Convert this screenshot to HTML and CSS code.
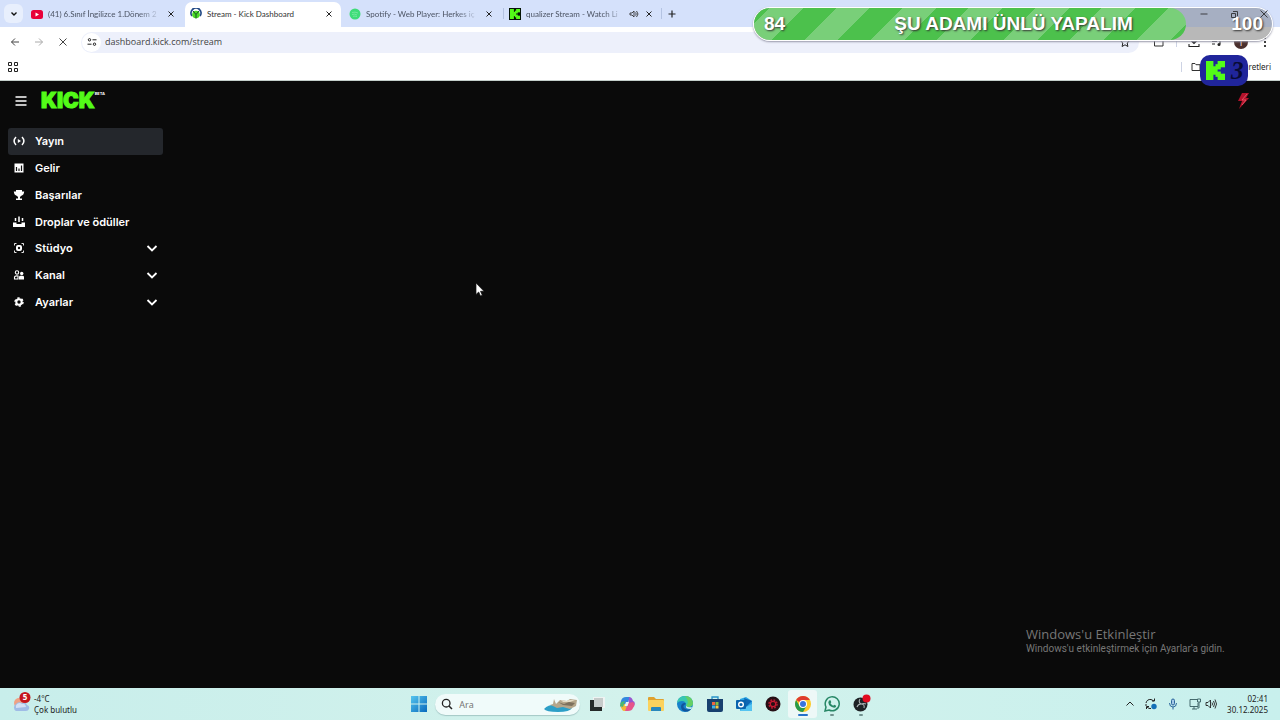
FILE: index.html
```html
<!DOCTYPE html>
<html lang="tr">
<head>
<meta charset="utf-8">
<title>Stream - Kick Dashboard</title>
<link rel="stylesheet" href="styles.css">
</head>
<body>
<svg class="defs" aria-hidden="true">
  <symbol id="close" viewBox="0 0 10 10"><path d="M2.500 2.500l5 5M7.500 2.500l-5 5" stroke="currentColor" stroke-width="1"/></symbol>
  <symbol id="kmark" viewBox="0 0 18 18"><rect width="7" height="18"/><rect x="6" y="5" width="5" height="8"/><rect x="9" y="3" width="5" height="5"/><rect x="9" y="10" width="5" height="5"/><rect x="11" width="7" height="6"/><rect x="11" y="12" width="7" height="6"/></symbol>
  <symbol id="down" viewBox="0 0 12 12"><path d="M1.500 4l4.500 4.500L10.500 4" fill="none" stroke="currentColor" stroke-width="1.800"/></symbol>
</svg>

<header class="browser">
  <div class="tabstrip">
    <button class="tab-search" aria-label="Sekmelerde ara"><svg class="i8" viewBox="0 0 8 8"><path d="M1.500 2.500L4 5l2.500-2.500" fill="none" stroke="#111" stroke-width="1.400"/></svg></button>
    <div class="tab">
      <svg class="i12" viewBox="0 0 12 12"><rect y="2" width="12" height="9" rx="2.500" fill="#e8003a"/><path d="M4.500 4.500v4l3.500-2z" fill="#fff"/></svg>
      <span class="tab-title">(41) 6.Sınıf İngilizce 1.Dönem 2</span>
      <button class="plain" aria-label="Kapat"><svg class="i10"><use href="#close"/></svg></button>
    </div>
    <div class="tab active">
      <svg class="i12" viewBox="0 0 12 12"><path d="M2 8A5 5 0 1 1 10 8" fill="none" stroke="#244b86" stroke-width="1.800"/><circle cx="6" cy="6.500" r="3.800" fill="#4cdb25"/><path d="M6 6.500L3 3M6 6.500L9 3M6 6.500v4" stroke="#154d2a" stroke-width="1"/></svg>
      <span class="tab-title">Stream - Kick Dashboard</span>
      <button class="plain" aria-label="Kapat"><svg class="i10"><use href="#close"/></svg></button>
    </div>
    <div class="tab">
      <svg class="i12" viewBox="0 0 12 12"><circle cx="6" cy="6" r="5.500" fill="#3fdc78"/><path d="M3 4.500q3-1 6 .5M3 6.500q3-1 5 .5M4 8.300q2-.6 4 .3" fill="none" stroke="#7ceba5" stroke-width=".8"/></svg>
      <span class="tab-title">Spotify - Web Player: Herkes iç</span>
      <button class="plain" aria-label="Kapat"><svg class="i10"><use href="#close"/></svg></button>
    </div>
    <div class="tab divided">
      <svg class="i12" viewBox="0 0 12 12"><rect width="12" height="12" fill="#061506"/><use href="#kmark" x="1" y="1" width="10" height="10" fill="#53fc18"/></svg>
      <span class="tab-title">qualizer Stream - Watch Li</span>
      <svg class="i10" viewBox="0 0 10 10"><path d="M1 4h2l2-2v6L3 6H1zM6.500 3.500q1.500 1.500 0 3M7.500 2q3 3 0 6" fill="none" stroke="#333" stroke-width=".9"/></svg>
      <button class="plain" aria-label="Kapat"><svg class="i10"><use href="#close"/></svg></button>
    </div>
    <button class="plain new-tab" aria-label="Yeni sekme"><svg class="i10" viewBox="0 0 10 10"><path d="M5 1.500v7M1.500 5h7" stroke="#222" stroke-width="1.200"/></svg></button>
    <div class="window-buttons">
      <button class="plain" aria-label="Küçült"><svg class="i10" viewBox="0 0 10 10"><path d="M1.500 5h7" stroke="#222"/></svg></button>
      <button class="plain" aria-label="Geri yükle"><svg class="i10" viewBox="0 0 10 10"><path d="M2.500 4.500h4v4h-4zM4 2.500h4.500V7" fill="none" stroke="#222"/></svg></button>
      <button class="plain" aria-label="Pencereyi kapat"><svg class="i10" viewBox="0 0 10 10"><path d="M1.500 1.500l7 7M8.500 1.500l-7 7" stroke="#222"/></svg></button>
    </div>
  </div>
  <div class="toolbar">
    <button class="plain" aria-label="Geri"><svg class="i12" viewBox="0 0 12 12"><path d="M10 6H2.500M6 2.500L2.500 6 6 9.500" fill="none" stroke="#444" stroke-width="1"/></svg></button>
    <button class="plain" aria-label="İleri"><svg class="i12" viewBox="0 0 12 12"><path d="M2 6h7.500M6 2.500L9.500 6 6 9.500" fill="none" stroke="#aaa" stroke-width="1"/></svg></button>
    <button class="plain" aria-label="Durdur"><svg class="i12" viewBox="0 0 12 12"><path d="M2.500 2.500l7 7M9.500 2.500l-7 7" stroke="#444"/></svg></button>
    <div class="omnibox">
      <button class="site-info" aria-label="Site bilgileri"><svg class="i10" viewBox="0 0 10 10"><circle cx="2.500" cy="2.800" r="1.200" fill="none" stroke="#222"/><path d="M5.500 2.800h4M.5 7.200h4" stroke="#222"/><circle cx="7.500" cy="7.200" r="1.200" fill="none" stroke="#222"/></svg></button>
      <input class="address" aria-label="Adres" value="dashboard.kick.com/stream">
      <svg class="i12" viewBox="0 0 12 12"><path d="M6 1.500l1.400 3 3.100.3-2.300 2.200.7 3.500L6 8.800l-2.900 1.700.7-3.500L1.500 4.800l3.100-.3z" fill="none" stroke="#222"/></svg>
    </div>
    <div class="actions">
      <svg class="i12" viewBox="0 0 12 12"><path d="M1.500 10V4H4q0-2 2-2t2 2h2v6z" fill="none" stroke="#333"/></svg>
      <i class="rule"></i>
      <svg class="i12" viewBox="0 0 12 12"><path d="M6 1v6M3.500 5L6 7.500 8.500 5M1 8v2.500h10V8" fill="none" stroke="#222" stroke-width="1.100"/></svg>
      <svg class="i12" viewBox="0 0 12 12"><path d="M1 3h6M1 5.500h5M1 8h3M9 8V3h2" fill="none" stroke="#222" stroke-width="1.100"/><circle cx="8" cy="8.500" r="1.500" fill="#222"/></svg>
      <span class="avatar">i</span>
      <svg class="i12" viewBox="0 0 12 12"><circle cx="6" cy="2" r="1"/><circle cx="6" cy="6" r="1"/><circle cx="6" cy="10" r="1"/></svg>
    </div>
  </div>
  <div class="bookmarks">
    <button class="plain" aria-label="Uygulamalar"><svg class="i10" viewBox="0 0 10 10"><path d="M.5.5h3v3h-3zM6.500.5h3v3h-3zM.5 6.500h3v3h-3zM6.500 6.500h3v3h-3z" fill="none" stroke="#222"/></svg></button>
    <div class="all-bookmarks"><i class="rule"></i><svg class="i10" viewBox="0 0 10 10"><path d="M1 8.500v-7h3l1 1.200h4v5.800z" fill="none" stroke="#333"/></svg><span>Tüm Yer İşaretleri</span></div>
  </div>
</header>

<div class="app">
  <div class="app-header">
    <button class="plain menu" aria-label="Menü"><svg class="i12" viewBox="0 0 12 12"><path d="M.5 2h11M.5 6h11M.5 10h11" stroke="#fff" stroke-width="1.300"/></svg></button>
    <a class="logo" href="#">KICK<sup>BETA</sup></a>
    <svg class="bolt" viewBox="0 0 14 18"><path d="M6 1h7l-3 5h3L3 17l3-8H2z" fill="#b3122b"/><path d="M11 2L6 8h4l-4 5" fill="none" stroke="#e8606e" stroke-width=".8"/></svg>
  </div>
  <nav class="sidebar">
    <a class="item selected" href="#"><svg class="i12" viewBox="0 0 12 12"><path d="M3 2Q-.8 6 3 10M9 2q3.800 4 0 8" fill="none" stroke="#fff" stroke-width="1.500"/><path d="M4.800 4v4L8 6z" fill="#fff"/></svg>Yayın</a>
    <a class="item" href="#"><svg class="i12" viewBox="0 0 12 12"><rect x="1.500" y="1.500" width="9" height="9" fill="#fff"/><path d="M3.500 5v4M6 6.500V9M8.500 3.500V9" stroke="#111" stroke-width="1.200"/></svg>Gelir</a>
    <a class="item" href="#"><svg class="i12" viewBox="0 0 12 12"><path d="M3 1h6v1.500h2.200Q11 6 8 7L7 8v1.500h2V11H3V9.500h2V8L4 7Q1 6 .8 2.500H3z" fill="#fff"/></svg>Başarılar</a>
    <a class="item" href="#"><svg class="i12" viewBox="0 0 12 12"><path d="M0 6.500h3.500V8h5V6.500H12V11H0z" fill="#fff"/><path d="M6 .5V6M2.500 2v3M9.500 2v3" stroke="#fff" stroke-width="1.500"/></svg>Droplar ve ödüller</a>
    <button class="item"><svg class="i12" viewBox="0 0 12 12"><path d="M1.500 3.500v-2h2M8.500 1.500h2v2M10.500 8.500v2h-2M3.500 10.500h-2v-2" fill="none" stroke="#fff" stroke-width=".9"/><rect x="3" y="3" width="6" height="6" rx="2" fill="#fff"/><circle cx="6" cy="6" r="1.200" fill="#111"/></svg>Stüdyo<svg class="i12 chevron"><use href="#down"/></svg></button>
    <button class="item"><svg class="i12" viewBox="0 0 12 12"><circle cx="4" cy="3.500" r="1.700" fill="none" stroke="#fff" stroke-width="1.100"/><path d="M1.500 10V8Q2 6.500 5 7v3z" fill="none" stroke="#fff" stroke-width="1.100"/><circle cx="8.700" cy="4.500" r="1.700" fill="#fff"/><path d="M6 10.500V8q0-1.200 1.500-1.200h2Q11 6.800 11 8v2.500z" fill="#fff"/></svg>Kanal<svg class="i12 chevron"><use href="#down"/></svg></button>
    <button class="item"><svg class="i12" viewBox="0 0 12 12"><circle cx="6" cy="6" r="2.700" fill="none" stroke="#fff" stroke-width="2"/><circle cx="6" cy="6" r="4" fill="none" stroke="#fff" stroke-width="1.500" stroke-dasharray="2.200 1.989"/></svg>Ayarlar<svg class="i12 chevron"><use href="#down"/></svg></button>
  </nav>
  <div class="watermark"><p class="wm-title">Windows'u Etkinleştir</p><p class="wm-text">Windows'u etkinleştirmek için Ayarlar'a gidin.</p></div>
</div>

<footer class="taskbar">
  <div class="weather">
    <svg class="i24" viewBox="0 0 24 24"><circle cx="9" cy="11" r="5" fill="#efa184"/><path d="M6 19a4 4 0 0 1 0-7q2-3 6-1 4-2 5 2 3 1 2 4-1 2-3 2z" fill="#9fbce6"/><path d="M6 16a4 4 0 0 1 1-4q3-2 5 0 3-1 4 3z" fill="#d3e0f5"/><circle cx="15" cy="5.500" r="5.500" fill="#c5161d"/><text x="15" y="8" text-anchor="middle" class="badge-text">5</text></svg>
    <div><div>-4°C</div><div>Çok bulutlu</div></div>
  </div>
  <div class="dock">
    <button class="plain app-slot" aria-label="Başlat"><svg class="i16" viewBox="0 0 16 16"><defs><linearGradient id="win" x2="1" y2="1"><stop stop-color="#55c5ee"/><stop offset="1" stop-color="#0869bd"/></linearGradient></defs><path d="M0 0h7.500v7.500H0zM8.500 0H16v7.500H8.500zM0 8.500h7.500V16H0zM8.500 8.500H16V16H8.500z" fill="url(#win)"/></svg></button>
    <label class="search"><svg class="i12" viewBox="0 0 12 12"><circle cx="5.200" cy="5.200" r="3.800" fill="none" stroke="#222" stroke-width="1.300"/><path d="M8 8l3 3" stroke="#222" stroke-width="1.500"/></svg><input placeholder="Ara" aria-label="Ara"><svg class="scene" viewBox="0 0 34 16"><path d="M0 13q5-5 13-4 9-1 15 3-2 4-14 4T0 13z" fill="#2d9fc7"/><path d="M6 9l3-1 1-5 2 5 4-4 7 1 3-2 7 1-1 6-6 3-7-2-6 1-4-2z" fill="#b5a68b"/><path d="M14 6l6 2 5-2 6 1-3 3-9-1z" fill="#7d705d"/><path d="M17 4l5 1 3-1 6 0-5 2-7 0z" fill="#e5dbc5"/></svg></label>
    <button class="plain app-slot" aria-label="Görev görünümü"><svg class="i16" viewBox="0 0 16 16"><rect x="4" y="1" width="12" height="11" fill="#eef3f2"/><rect x="1" y="4" width="12" height="11" fill="#252928"/><rect x="5" y="2" width="9" height="9" fill="#c6cbca"/></svg></button>
    <button class="plain app-slot" aria-label="Copilot"><svg class="i16" viewBox="0 0 16 16"><path d="M2 5q1-4 5-4h4l-4 11H3q-3-1-1-7z" fill="#3288df"/><path d="M1 8h5l3 6q-1 1-4 1-2 0-3-4z" fill="#f4b637"/><path d="M10 1q3 0 4 4 3 1 1 5l-6 1z" fill="#9855cf"/><path d="M14 6q3 2 0 6-1 3-5 3H6l3-8z" fill="#e6558a"/><path d="M2 6l4-1-2 6-3-1z" fill="#49b873"/><path d="M7 6h3L8.500 10h-3z" fill="#e2f3f4"/></svg></button>
    <button class="plain app-slot" aria-label="Dosya Gezgini"><svg class="i16" viewBox="0 0 16 16"><path d="M0 2q0-1 1-1h5l2 2h7q1 0 1 1v10H0z" fill="#dfa12f"/><rect y="4" width="16" height="11" rx="1" fill="#fbd25d"/><path d="M3 15v-3q0-1 1-1h8q1 0 1 1v3z" fill="#2988bd"/></svg></button>
    <button class="plain app-slot" aria-label="Edge"><svg class="i16" viewBox="0 0 16 16"><circle cx="8" cy="8" r="8" fill="#1681ca"/><path d="M0 7q1-7 8-7 7 0 8 7 0 4-5 4-3 0-2-2Q9 5 5 5 2 5 0 7z" fill="#38c8b0"/><path d="M8 0q7 0 8 7 0 4-5 4-2 0-2-1 4-4-1-10z" fill="#66cf64"/><path d="M9 8q-4 1-2 4 3 3 7 1l-2 2Q5 17 4 11q0-4 4-4z" fill="#11549c"/><path d="M9 10q2 2 6 1l-1 2q-6 0-5-3z" fill="#cbeff0"/></svg></button>
    <button class="plain app-slot" aria-label="Microsoft Store"><svg class="i16" viewBox="0 0 16 16"><path d="M5 4V1h6v3" fill="none" stroke="#2792c9" stroke-width="1.300"/><path d="M0 3h16v11q0 2-2 2H2q-2 0-2-2z" fill="#17406f"/><path d="M5 6h3v3H5z" fill="#ef6540"/><path d="M8.500 6h3v3h-3z" fill="#80bd45"/><path d="M5 9.500h3v3H5z" fill="#3db2e9"/><path d="M8.500 9.500h3v3h-3z" fill="#f7c841"/></svg></button>
    <button class="plain app-slot" aria-label="Outlook"><svg class="i16" viewBox="0 0 16 16"><path d="M4 3l6-2 6 4v9q0 1-1 1H5q-1 0-1-1z" fill="#2ba4e4"/><path d="M8 2l8 3-6 6z" fill="#0c66b4"/><path d="M4 14l12-6v6q0 1-1 1H5z" fill="#55c4f1"/><rect y="4" width="10" height="9" rx="1" fill="#0863ae"/><circle cx="5" cy="8.500" r="2.300" fill="none" stroke="#fff" stroke-width="1.400"/></svg></button>
    <button class="plain app-slot" aria-label="Oyun uygulaması"><svg class="i16" viewBox="0 0 16 16"><circle cx="8" cy="8" r="7.500" fill="#260f15"/><circle cx="8" cy="8" r="2.700" fill="none" stroke="#c91a32" stroke-width="1.200"/><circle cx="8" cy="8" r="4" fill="none" stroke="#b91930" stroke-width="1.500" stroke-dasharray="1.800 1.342"/></svg></button>
    <button class="plain app-slot open current" aria-label="Chrome"><svg class="i16" viewBox="0 0 16 16"><circle cx="8" cy="8" r="8" fill="#fbc928"/><path d="M8 8L1.100 4A8 8 0 0 1 14.900 4H8z" fill="#df3b31"/><path d="M1.100 4A8 8 0 0 0 8 16l3.500-6L8 8 4.500 10z" fill="#279b4b"/><circle cx="8" cy="8" r="4" fill="#fff"/><circle cx="8" cy="8" r="3" fill="#3674df"/></svg></button>
    <button class="plain app-slot open" aria-label="WhatsApp"><svg class="i16" viewBox="0 0 16 16"><path d="M1 15l1-4A7 7 0 1 1 5 14z" fill="none" stroke="#278766" stroke-width="1.500"/><path d="M5 4.500l1.500-.2.800 2-.8 1q1 1.700 2.700 2.400l1-1 2 1q0 2-2 2Q5 11 4.300 6.500z" fill="#278766"/></svg></button>
    <button class="plain app-slot open" aria-label="OBS Studio"><svg class="i16 obs" viewBox="0 0 16 16"><circle cx="7.500" cy="8.500" r="7" fill="#1d2225"/><path d="M7 3q-2 3 1 5 4 0 3 4M8 8q-3 0-4 3M8 8q3-1 5 0" fill="none" stroke="#aeb4b6" stroke-width="1.100"/><circle cx="13.500" cy="2.500" r="4" fill="#e20c20"/></svg></button>
  </div>
  <div class="tray">
    <button class="plain" aria-label="Gizli simgeler"><svg class="i10" viewBox="0 0 10 10"><path d="M1.500 6.500L5 3l3.500 3.500" fill="none" stroke="#222"/></svg></button>
    <svg class="i12" viewBox="0 0 12 12"><path d="M1 5q1-4 5-3.500L9 3M9.500.5V3H7M1.500 11V8.500H4M2 9q2 2 4 1.500M1 6v2" fill="none" stroke="#222"/><circle cx="9" cy="8.500" r="2.700" fill="#146fb6"/></svg>
    <svg class="i12 mic" viewBox="0 0 12 12"><rect x="4.500" y="1" width="3" height="6" rx="1.500" fill="#a3c7e6" stroke="#2a659c"/><path d="M2.500 5q0 4 3.500 4t3.500-4M6 9v2.500" fill="none" stroke="#2a659c"/></svg>
    <div class="net"><svg class="i12" viewBox="0 0 12 12"><path d="M8 1.500H1v7h8V5M3 11h5M5 8.500V11M8.500 1h3v3h-3zM10 4v6H8" fill="none" stroke="#355b60" stroke-width=".9"/></svg><svg class="i12" viewBox="0 0 12 12"><path d="M1 4.500h2L5.500 2v8L3 7.500H1zM7 4.500q1 1.500 0 3M8.500 3q2 3 0 6M10 1.500q3 4.500 0 9" fill="none" stroke="#222" stroke-width=".9"/></svg></div>
    <div class="clock"><div>02:41</div><div>30.12.2025</div></div>
  </div>
</footer>

<div class="goal"><div class="goal-fill"></div><span class="goal-now">84</span><strong class="goal-title">ŞU ADAMI ÜNLÜ YAPALIM</strong><span class="goal-max">100</span></div>
<div class="viewers"><svg class="viewers-k"><use href="#kmark"/></svg><span>3</span></div>
<svg class="cursor" viewBox="0 0 10 15"><path d="M1 1v11.500l2.700-2.500 1.800 4 1.800-.8-1.800-3.900H9z" fill="#fff" stroke="#111" stroke-width=".7"/></svg>
</body>
</html>
```
FILE: styles.css
```css
* { box-sizing: border-box; }
html, body { margin: 0; height: 100%; }
body { display: flex; flex-direction: column; position: relative; overflow: hidden; background: #0a0a0a; font-family: "Noto Sans", "Open Sans", sans-serif; font-size: 8px; color: #222; }
svg { display: block; flex: none; }
.defs { position: absolute; width: 0; height: 0; }
button, input { font: inherit; color: inherit; border: 0; padding: 0; background: none; }
input { outline: 0; min-width: 0; }
a { color: inherit; text-decoration: none; }
p { margin: 0; }
.i8 { width: 8px; height: 8px; }
.i10 { width: 10px; height: 10px; }
.i12 { width: 12px; height: 12px; }
.i16 { width: 16px; height: 16px; }
.i24 { width: 24px; height: 24px; }
.plain { display: grid; place-items: center; flex: none; }
.rule { width: 1px; height: 10px; background: #cdd3e4; }

.browser { flex: none; background: #fff; border-bottom: 1px solid #c4cfcb; }
.tabstrip { display: flex; align-items: center; height: 27px; padding-left: 4px; background: #d5e1fb; }
.tab-search { display: grid; place-items: center; width: 19px; height: 19px; margin-right: 3px; border-radius: 6px; background: #e8effd; }
.tab { display: flex; align-items: center; gap: 5px; width: 159px; height: 23px; padding: 0 9px 0 5px; color: #4b5363; }
.tab-title { flex: 1; min-width: 0; font: 8px/14px Lato, sans-serif; white-space: nowrap; overflow: hidden; mask-image: linear-gradient(90deg, #000 80%, transparent); }
.tab.active { width: 156px; margin-right: 3px; padding-right: 7px; background: #fff; box-shadow: 0 4px #fff; border-radius: 7px 7px 0 0; color: #333; }
.tab.active .tab-title { mask-image: none; }
.tab .plain { color: #222; }
.divided { border-left: 1px solid; border-right: 1px solid; border-image: linear-gradient(transparent 30%, #b4c3e2 30% 70%, transparent 70%) 1; padding-right: 7px; }
.new-tab { width: 20px; height: 20px; }
.window-buttons { display: flex; gap: 20px; margin-left: auto; padding-right: 11px; position: relative; z-index: 2; opacity: .8; }
.toolbar { display: flex; align-items: center; gap: 12px; height: 30px; padding: 0 9px; }
.omnibox { display: flex; flex: 1; align-items: center; height: 21px; padding-right: 8px; border-radius: 11px; background: #edf0fb; }
.site-info { display: grid; place-items: center; width: 19px; height: 19px; margin: 1px; border-radius: 10px; background: #fff; }
.address { flex: 1; padding: 0 0 1px 3px; font: 9px/16px "Open Sans", sans-serif; color: #444; }
.actions { display: flex; align-items: center; gap: 11px; padding-left: 2px; }
.avatar { display: grid; place-items: center; width: 14px; height: 14px; border-radius: 7px; background: #4b302e; color: #fff; font-size: 8px; }
.bookmarks { display: flex; align-items: center; justify-content: space-between; height: 23px; padding: 0 9px 4px 8px; }
.all-bookmarks { display: flex; align-items: center; gap: 9px; font-size: 8px; }
.all-bookmarks span { margin-left: -5px; }

.app { display: flex; flex-direction: column; flex: 1; min-height: 0; background: #0a0a0a; font-family: Inter, sans-serif; color: #fff; }
.app-header { display: flex; align-items: center; height: 40px; padding: 0 30px 0 15px; }
.logo { margin-left: 14px; font: 900 21px/24px Inter, sans-serif; color: #53fc18; -webkit-text-stroke: 1px #53fc18; white-space: nowrap; display: flex; }
.logo sup { font: 700 4px/8px Inter, sans-serif; color: #fff; -webkit-text-stroke: 0; padding-top: 1px; }
.bolt { width: 14px; height: 18px; margin-left: auto; }
.sidebar { display: flex; flex-direction: column; width: 155px; height: 187px; margin: 7px 0 0 8px; }
.item { display: flex; flex: 1; align-items: center; gap: 10px; padding: 0 5px; border-radius: 3px; font: 600 11px/16px Inter, sans-serif; text-align: left; }
.item.selected { background: #24272c; }
.chevron { margin-left: auto; }
.watermark { align-self: flex-end; width: 254px; margin-top: auto; padding-bottom: 32px; font-family: "Open Sans", sans-serif; color: #777; white-space: nowrap; }
.wm-title { font-size: 13px; line-height: 16px; }
.wm-text { font: 10px/14px Roboto, sans-serif; }

.taskbar { flex: none; display: grid; grid-template-columns: 1fr auto 1fr; align-items: center; height: 32px; padding: 0 12px; background: linear-gradient(90deg, #c8eeeb, #d3f2ec 50%, #c8f0ed); font: 8px/11px "Noto Sans", sans-serif; }
.weather { display: flex; align-items: center; margin-left: -2px; }
.badge-text { fill: #fff; font: 700 8px "Noto Sans", sans-serif; }
.dock { display: flex; align-items: center; justify-content: space-between; width: 472px; }
.app-slot { position: relative; width: 29px; height: 28px; }
.search { display: flex; align-items: center; gap: 6px; width: 145px; height: 21px; padding: 0 2px 0 6px; border-radius: 11px; background: #f0fbfa; box-shadow: 0 1px 1px #a4c8c6; margin: 0 2px; }
.search input { flex: 1; font-size: 9px; }
.scene { width: 34px; height: 16px; }
.current { background: #edf8f7; border-radius: 3px; }
.open::after { content: ""; position: absolute; bottom: 2px; left: 50%; width: 4px; height: 2px; margin-left: -2px; border-radius: 1px; background: #72928f; }
.current::after { width: 10px; margin-left: -5px; background: #2672c9; }
.obs { overflow: visible; }
.tray { display: flex; align-items: center; justify-content: flex-end; gap: 10px; }
.net { display: flex; gap: 4px; }
.clock { text-align: right; }

.goal { position: absolute; top: 7px; right: 7px; width: 520px; height: 34px; border: 1px solid #fff; border-radius: 17px; background: linear-gradient(#a6afc2 58%, #b8b8b8 58%); box-shadow: 0 1px 2px #99a; overflow: hidden; display: flex; align-items: center; justify-content: space-between; padding: 0 9px 0 10px; color: #fff; font: 700 19px/32px "Liberation Sans", sans-serif; text-shadow: 1px 1px 2px #333; }
.goal-fill { position: absolute; inset: 0 auto 0 0; width: 432px; border-radius: 0 16px 16px 0; background: repeating-linear-gradient(135deg, #4cc14c 0 11px, #79cf79 11px 35px, #4cc14c 35px 47px); }
.goal span, .goal strong { position: relative; }
.goal-now, .goal-max { width: 60px; }
.goal-max { text-align: right; }
.viewers { position: absolute; top: 55px; right: 32px; display: flex; align-items: center; gap: 6px; width: 48px; height: 31px; padding-left: 6px; border-radius: 10px; background: #20259b; color: #080b35; font: italic 700 25px/30px "Liberation Serif", serif; }
.viewers-k { width: 19px; height: 21px; fill: #53fc18; }
.cursor { position: absolute; left: 475px; top: 282px; width: 10px; height: 15px; }
```
